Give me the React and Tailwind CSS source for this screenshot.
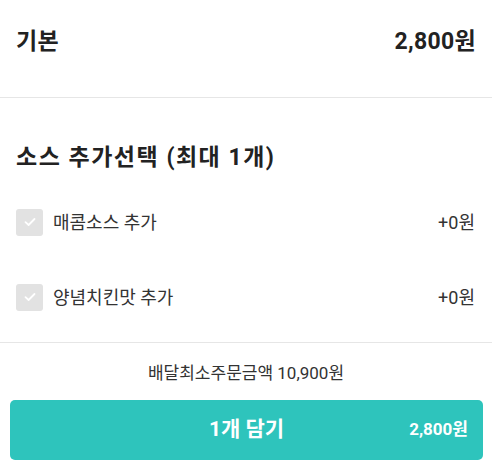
export default function App() {
  const font = { fontFamily: 'Roboto, "Noto Sans CJK KR", sans-serif' };
  const Check = () => (
    <div className="w-[27px] h-[27px] rounded-[3px] bg-[#e2e2e2] flex items-center justify-center shrink-0">
      <svg width="14" height="14" viewBox="0 0 14 14" fill="none">
        <path d="M2.5 7.2 L5.6 10 L11.5 4" stroke="#ffffff" strokeWidth="1.8" strokeLinecap="round" strokeLinejoin="round" />
      </svg>
    </div>
  );
  return (
    <div className="w-[492px] h-[469px] bg-white overflow-hidden text-[#222]" style={font}>
      <div className="h-[97px] flex items-center justify-between pl-[16px] pr-[16px] pb-[12px]">
        <span className="text-[23px] font-bold tracking-[0.3px]">기본</span>
        <span className="text-[23px] font-bold tracking-[0.3px]">2,800원</span>
      </div>
      <div className="h-px bg-[#e6e6e6]" />
      <div className="pt-[46px] pl-[16px] pr-[17px]">
        <div className="text-[23px] font-bold leading-[28px] tracking-[1.5px]">소스 추가선택 (최대 1개)</div>
        <div className="mt-[36px] h-[28px] flex items-center justify-between">
          <div className="flex items-center gap-[10px]">
            <Check />
            <span className="text-[18px] text-[#333]">매콤소스 추가</span>
          </div>
          <span className="text-[18px] text-[#333]">+0원</span>
        </div>
        <div className="mt-[47px] h-[28px] flex items-center justify-between">
          <div className="flex items-center gap-[10px]">
            <Check />
            <span className="text-[18px] text-[#333]">양념치킨맛 추가</span>
          </div>
          <span className="text-[18px] text-[#333]">+0원</span>
        </div>
      </div>
      <div className="mt-[31px] h-px bg-[#e6e6e6]" />
      <div className="h-[57px] pt-[5px] flex items-center justify-center text-[17px] text-[#333]">
        배달최소주문금액 10,900원
      </div>
      <div className="pl-[10px] pr-[9px]">
        <div className="relative h-[60px] rounded-[5px] bg-[#2ec4bc] flex items-center justify-center text-white">
          <span className="text-[21px] font-bold">1개 담기</span>
          <span className="absolute right-[15px] text-[17px] font-bold">2,800원</span>
        </div>
      </div>
    </div>
  );
}
